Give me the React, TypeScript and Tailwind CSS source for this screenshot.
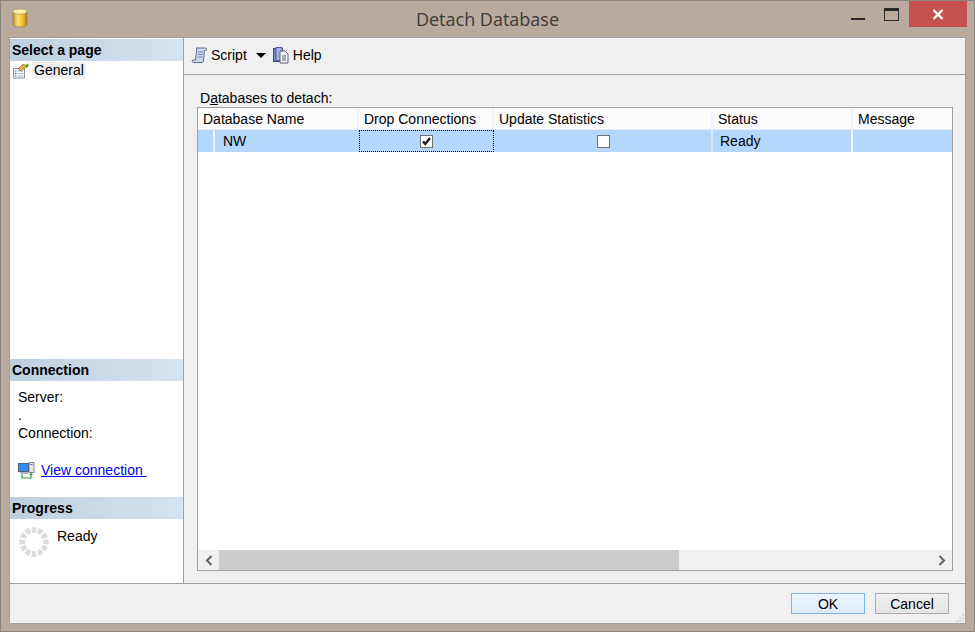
import React from 'react';

const SPOKES = Array.from({ length: 12 }, (_, i) => i * 30);

function DbIcon() {
  return (
    <svg width="16" height="20" viewBox="0 0 16 20">
      <defs>
        <linearGradient id="db" x1="0" x2="1" y1="0" y2="0">
          <stop offset="0" stopColor="#c99a10" />
          <stop offset="0.35" stopColor="#fbe07a" />
          <stop offset="0.75" stopColor="#eeb721" />
          <stop offset="1" stopColor="#a97d12" />
        </linearGradient>
      </defs>
      <path d="M1 4v12c0 2 3 3 7 3s7-1 7-3V4z" fill="url(#db)" stroke="#8a7a5a" strokeWidth="0.7" />
      <ellipse cx="8" cy="3.6" rx="7" ry="2.6" fill="#fdf0ad" stroke="#a8975f" strokeWidth="0.7" />
    </svg>
  );
}

function GeneralIcon() {
  return (
    <svg width="16" height="16" viewBox="0 0 16 16">
      <rect x="0.5" y="5.5" width="11" height="9.5" fill="#f8f9fd" stroke="#8a93aa" />
      <path d="M2 8h1.5M2 10.5h1.5M2 13h1.5" stroke="#3f66b0" />
      <path d="M5 8h5M5 10.5h5M5 13h5" stroke="#a3abbd" />
      <path d="M5 6l5-5 3.500 2-5 5z" fill="#e6b23a" stroke="#6e5a24" strokeWidth="0.6" />
      <path d="M12 2l3.500-1.500v3L13.500 5z" fill="#5aa52e" />
    </svg>
  );
}

function ScriptIcon() {
  return (
    <svg width="17" height="17" viewBox="0 0 17 17">
      <path
        d="M5 1h9.500c1.500 0 1.500 2.500 0 2.500H13.500L12.500 13c0 1.500-.5 2.500-1.500 2.500H2.500C1 15.500.5 13 2 13h2.500L5.500 4C5.700 2.500 5.500 1.500 5 1z"
        fill="#c9d6ec"
        stroke="#50648c"
        strokeWidth="0.9"
      />
      <path d="M7 5h5M7 7.500h4.700M6.500 10h5" stroke="#7086ad" />
    </svg>
  );
}

function HelpIcon() {
  return (
    <svg width="16" height="17" viewBox="0 0 16 17">
      <rect x="0.500" y="1.500" width="9" height="13" fill="#7a8ac8" stroke="#3c4a86" />
      <rect x="3" y="0.500" width="6" height="13" fill="#a9b5e0" stroke="#4a5896" />
      <path d="M7 4h5l3 3v9H7z" fill="#f6f6f6" stroke="#59617a" />
      <path d="M9 9h4M9 11h4M9 13h4" stroke="#59617a" />
    </svg>
  );
}

function ConnIcon() {
  return (
    <svg width="17" height="17" viewBox="0 0 17 17">
      <rect x="11" y="0.500" width="5" height="10" fill="#e2e6ee" stroke="#7a8496" />
      <rect x="12.500" y="2" width="2" height="1" fill="#667" />
      <rect x="0.500" y="1.500" width="10" height="8" fill="#2f8cf0" stroke="#50607a" />
      <rect x="2" y="10" width="8" height="2" fill="#a9b3c2" />
      <path d="M4 12.500V16h9V12" fill="none" stroke="#2e9b36" strokeWidth="1.200" />
      <path d="M11 13l2-2.500 2 2.500z" fill="#2e9b36" />
    </svg>
  );
}

function Spinner() {
  return (
    <svg width="32" height="32" viewBox="0 0 32 32">
      {SPOKES.map((a) => (
        <path
          key={a}
          d="M13.200 1.300h5.600l-1 5.700h-3.600z"
          fill="#dcdcdc"
          transform={`rotate(${a} 16 16)`}
        />
      ))}
    </svg>
  );
}

function SectionHead({ children }: { children: React.ReactNode }) {
  return (
    <div className="flex h-[22px] items-center bg-gradient-to-r from-[#bdcfdf] to-[#d6e3f0] pl-[2px] text-[14px] font-bold text-black">
      {children}
    </div>
  );
}

function HeadCell({ w, children }: { w: string; children?: React.ReactNode }) {
  return (
    <div className={`${w} flex shrink-0 items-center border-r-2 border-[#f0f4fb] pl-[5px] pt-[2px]`}>{children}</div>
  );
}

function CheckBox({ on }: { on?: boolean }) {
  return (
    <span className="flex h-[13px] w-[13px] items-center justify-center border border-[#707070] bg-white">
      {on && (
        <svg width="11" height="11" viewBox="0 0 11 11">
          <path d="M2 5.500l2.300 2.500 4.700-6" fill="none" stroke="#222" strokeWidth="2.400" />
        </svg>
      )}
    </span>
  );
}

export default function App() {
  return (
    <div className="flex h-[632px] w-[975px] flex-col overflow-hidden border border-[#8d8680] bg-[#b9aa9e] font-['Liberation_Sans',Arial,sans-serif] text-[14px] text-black">
      {/* title bar */}
      <div className="relative flex h-[36px] shrink-0 items-center justify-center">
        <div className="absolute left-[11px] top-[7px]">
          <DbIcon />
        </div>
        <span className="font-['Open_Sans',sans-serif] text-[18px] text-[#3a3a3a]">Detach Database</span>
        <div className="absolute right-[75px] top-[7px] flex items-start gap-[19px]">
          <span className="mt-[10px] h-[2px] w-[14px] bg-[#2b2b2b]" />
          <span className="h-[13px] w-[15px] border border-[#2b2b2b] border-t-[3px]" />
        </div>
        <div className="absolute right-[7px] top-0 flex h-[26px] w-[58px] items-center justify-center bg-[#c75050]">
          <svg width="12" height="11" viewBox="0 0 12 11">
            <path d="M1.500 1l9 9M10.500 1l-9 9" stroke="#fff" strokeWidth="2.400" />
          </svg>
        </div>
      </div>

      {/* client area */}
      <div className="ml-[8px] mr-[8px] flex h-[587px] w-[957px] shrink-0 flex-col border border-[#a0a0a0] bg-[#f0f0f0]">
        <div className="flex min-h-0 flex-1 border-b border-[#a0a0a0]">
          {/* left panel */}
          <div className="flex w-[174px] shrink-0 flex-col border-r border-[#a0a0a0] bg-white">
            <div className="border-t border-white">
              <SectionHead>Select a page</SectionHead>
            </div>
            <div className="flex flex-1 items-start pl-[3px] pt-px">
              <span className="mt-[1px]">
                <GeneralIcon />
              </span>
              <span className="ml-[3px] bg-[#f0f0f0] px-[2px] leading-[17px]">General</span>
            </div>
            <SectionHead>Connection</SectionHead>
            <div className="flex h-[116px] flex-col pl-[8px]">
              <div className="mt-[8px] leading-[17px]">Server:</div>
              <div className="leading-[19px]">.</div>
              <div className="leading-[17px]">Connection:</div>
              <div className="mt-[18px] flex items-center">
                <ConnIcon />
                <span className="ml-[6px] text-[#0000ee] underline">View connection&nbsp;</span>
              </div>
            </div>
            <SectionHead>Progress</SectionHead>
            <div className="flex h-[64px] pl-[8px] pt-[7px]">
              <Spinner />
              <span className="ml-[7px] leading-[20px]">Ready</span>
            </div>
          </div>

          {/* right panel */}
          <div className="flex min-w-0 flex-1 flex-col">
            <div className="flex h-[37px] shrink-0 items-center border-b border-t border-b-[#a0a0a0] border-t-white pb-[2px] pl-[7px]">
              <ScriptIcon />
              <span className="ml-[3px]">Script</span>
              <span className="ml-[9px] h-0 w-0 border-x-[5px] border-t-[5px] border-x-transparent border-t-black" />
              <span className="ml-[7px]">
                <HelpIcon />
              </span>
              <span className="ml-[4px]">Help</span>
            </div>

            <div className="flex min-h-0 flex-1 flex-col pb-[12px] pl-[13px] pr-[12px] pt-[15px]">
              <div className="pl-[3px] leading-[17px]">
                D<span className="underline">a</span>tabases to detach:
              </div>
              {/* grid */}
              <div className="flex min-h-0 flex-1 flex-col border border-[#a0a0a0] bg-white">
                <div className="flex h-[22px] shrink-0 border-b border-[#e8eef8] bg-[#fcfcfc]">
                  <HeadCell w="w-[161px]">Database Name</HeadCell>
                  <HeadCell w="w-[135px]">Drop Connections</HeadCell>
                  <HeadCell w="w-[219px]">Update Statistics</HeadCell>
                  <HeadCell w="w-[140px]">Status</HeadCell>
                  <div className="flex flex-1 items-center pl-[5px] pt-[2px]">Message</div>
                </div>
                <div className="flex h-[22px] shrink-0 bg-[#b5d7fd]">
                  <div className="w-[17px] shrink-0 border-r-2 border-[#f0f4fb]" />
                  <div className="flex w-[144px] shrink-0 items-center pl-[8px]">NW</div>
                  <div className="flex w-[135px] shrink-0 items-center justify-center border border-dotted border-black">
                    <CheckBox on />
                  </div>
                  <div className="flex w-[219px] shrink-0 items-center justify-center border-r-2 border-[#d6e6fb] pl-[1px]">
                    <CheckBox />
                  </div>
                  <div className="flex w-[140px] shrink-0 items-center border-r-2 border-[#f0f4fb] pl-[7px]">Ready</div>
                  <div className="flex-1" />
                </div>
                <div className="flex-1" />
                <div className="flex h-[20px] shrink-0 items-stretch bg-[#f0f0f0]">
                  <div className="flex w-[21px] items-center justify-center">
                    <svg width="8" height="11" viewBox="0 0 8 11">
                      <path d="M6.500 1L2 5.500 6.500 10" fill="none" stroke="#606060" strokeWidth="2" />
                    </svg>
                  </div>
                  <div className="w-[460px] bg-[#cdcdcd]" />
                  <div className="flex flex-1 items-center justify-end pr-[6px]">
                    <svg width="8" height="11" viewBox="0 0 8 11">
                      <path d="M1.500 1L6 5.500 1.500 10" fill="none" stroke="#606060" strokeWidth="2" />
                    </svg>
                  </div>
                </div>
              </div>
            </div>
          </div>
        </div>

        {/* footer */}
        <div className="relative flex h-[39px] shrink-0 items-center justify-end gap-[10px] pr-[16px]">
          <button className="h-[21px] w-[74px] border border-[#7eb4ea] bg-gradient-to-b from-[#ecf4fc] to-[#dcecfc]">OK</button>
          <button className="h-[21px] w-[74px] border border-[#acacac] bg-gradient-to-b from-[#f0f0f0] to-[#e5e5e5]">Cancel</button>
          <svg className="absolute bottom-0 right-0" width="10" height="10" viewBox="0 0 10 10">
            <path d="M7 1h2v2H7zM4 4h2v2H4zM7 4h2v2H7zM1 7h2v2H1zM4 7h2v2H4zM7 7h2v2H7z" fill="#d8d8d8" />
          </svg>
        </div>
      </div>
    </div>
  );
}
